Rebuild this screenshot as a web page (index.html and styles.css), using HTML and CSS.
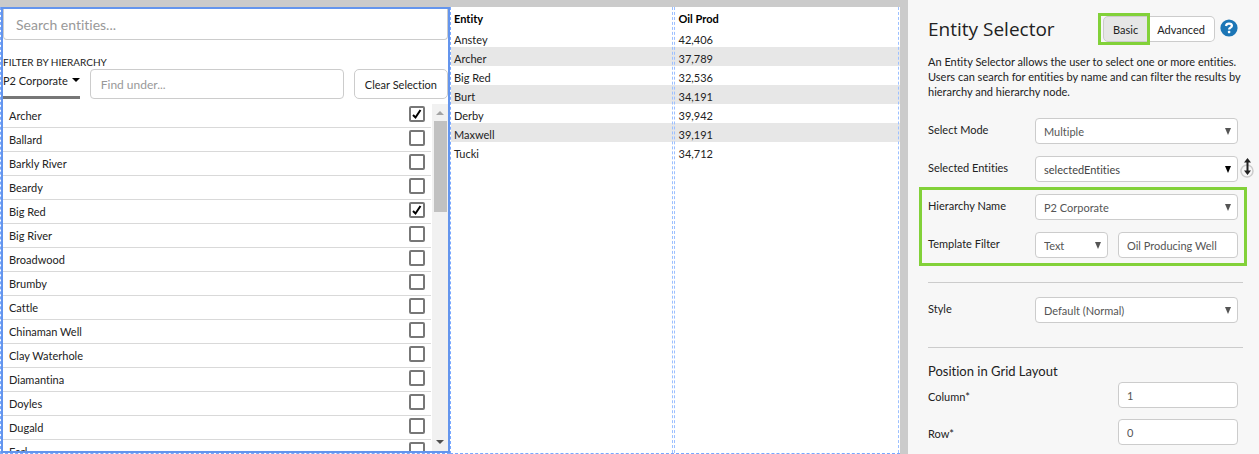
FILE: index.html
```html
<!DOCTYPE html>
<html lang="en">
<head>
<meta charset="utf-8">
<title>Entity Selector</title>
<link rel="stylesheet" href="styles.css">
</head>
<body>
<div class="app">
  <main class="canvas">
    <section class="selector">
      <div class="selector-frame">
        <input class="search" type="text" placeholder="Search entities..." aria-label="Search entities">
        <div class="filter-title">FILTER BY HIERARCHY</div>
        <div class="filter-row">
          <button class="hierarchy" type="button">P2 Corporate <span class="caret"></span></button>
          <input class="find" type="text" placeholder="Find under..." aria-label="Find under">
          <button class="clear" type="button">Clear Selection</button>
        </div>
        <div class="list-area">
          <div class="list">
            <label class="item"><span>Archer</span><input type="checkbox" checked></label>
            <label class="item"><span>Ballard</span><input type="checkbox"></label>
            <label class="item"><span>Barkly River</span><input type="checkbox"></label>
            <label class="item"><span>Beardy</span><input type="checkbox"></label>
            <label class="item"><span>Big Red</span><input type="checkbox" checked></label>
            <label class="item"><span>Big River</span><input type="checkbox"></label>
            <label class="item"><span>Broadwood</span><input type="checkbox"></label>
            <label class="item"><span>Brumby</span><input type="checkbox"></label>
            <label class="item"><span>Cattle</span><input type="checkbox"></label>
            <label class="item"><span>Chinaman Well</span><input type="checkbox"></label>
            <label class="item"><span>Clay Waterhole</span><input type="checkbox"></label>
            <label class="item"><span>Diamantina</span><input type="checkbox"></label>
            <label class="item"><span>Doyles</span><input type="checkbox"></label>
            <label class="item"><span>Dugald</span><input type="checkbox"></label>
            <label class="item"><span>Earl</span><input type="checkbox"></label>
          </div>
          <div class="scrollbar" aria-hidden="true">
            <span class="arrow arrow-up"></span>
            <span class="thumb"></span>
            <span class="arrow arrow-down"></span>
          </div>
        </div>
      </div>
    </section>
    <section class="results">
      <table class="data">
        <thead><tr><th>Entity</th><th>Oil Prod</th></tr></thead>
        <tbody>
          <tr><td>Anstey</td><td>42,406</td></tr>
          <tr><td>Archer</td><td>37,789</td></tr>
          <tr><td>Big Red</td><td>32,536</td></tr>
          <tr><td>Burt</td><td>34,191</td></tr>
          <tr><td>Derby</td><td>39,942</td></tr>
          <tr><td>Maxwell</td><td>39,191</td></tr>
          <tr><td>Tucki</td><td>34,712</td></tr>
        </tbody>
      </table>
      <div class="guides" aria-hidden="true"><span></span><span></span></div>
    </section>
  </main>
  <aside class="props">
    <header class="props-head">
      <h1>Entity Selector</h1>
      <div class="modes">
        <button class="mode mode-on" type="button">Basic</button>
        <button class="mode" type="button">Advanced</button>
      </div>
      <svg class="help" viewBox="0 0 18 18" role="img" aria-label="Help"><circle cx="9" cy="9" r="8.6" fill="#1c76b6"/><path d="M6 7C6.200 5.300 7.400 4.600 9 4.600c1.800 0 2.900.9 2.900 2.200 0 1.900-2.800 1.800-2.800 3.700" fill="none" stroke="#fff" stroke-width="2.300"/><rect x="7.900" y="11.800" width="2.400" height="2.400" rx=".7" fill="#fff"/></svg>
    </header>
    <p class="intro">An Entity Selector allows the user to select one or more entities. Users can search for entities by name and can filter the results by hierarchy and hierarchy node.</p>
    <div class="fields">
      <div class="field">
        <label for="mode">Select Mode</label>
        <select id="mode"><option>Multiple</option></select>
      </div>
      <div class="field">
        <label for="selected">Selected Entities</label>
        <div class="bound">
          <select id="selected" class="strong"><option>selectedEntities</option></select>
          <svg class="link" viewBox="0 0 14 22" aria-hidden="true"><circle cx="7" cy="14" r="6" fill="none" stroke="#ccc" stroke-width="1.500"/><path d="M7.500 3v13" stroke="#222" stroke-width="2"/><path d="M7.500 1 11 5.500H4zM7.500 18l3.500-4.500H4z" fill="#222"/></svg>
        </div>
      </div>
      <div class="marked">
        <div class="field">
          <label for="hier">Hierarchy Name</label>
          <select id="hier"><option>P2 Corporate</option></select>
        </div>
        <div class="field">
          <label for="kind">Template Filter</label>
          <div class="pair">
            <select id="kind"><option>Text</option></select>
            <input type="text" value="Oil Producing Well" aria-label="Template">
          </div>
        </div>
      </div>
    </div>
    <hr>
    <div class="field style-field">
      <label for="style">Style</label>
      <select id="style"><option>Default (Normal)</option></select>
    </div>
    <hr>
    <h2>Position in Grid Layout</h2>
    <div class="cells">
      <div class="cell"><label for="col">Column*</label><input id="col" type="text" value="1"></div>
      <div class="cell"><label for="row">Row*</label><input id="row" type="text" value="0"></div>
    </div>
  </aside>
</div>
</body>
</html>
```
FILE: styles.css
```css
* { box-sizing: border-box; }
body {
  margin: 0;
  font-family: Lato, "Open Sans", sans-serif;
  font-size: 11px;
  line-height: 15px;
  font-variant-ligatures: none;
  color: #222;
}
button, input, select { font: inherit; font-variant-ligatures: none; color: inherit; margin: 0; }
.app {
  display: grid;
  grid-template-columns: minmax(0, 1fr) 351px;
  height: 100vh;
  overflow: hidden;
}

/* Design canvas */
.canvas {
  display: grid;
  grid-template-columns: 1fr 1fr;
  min-height: 0;
  background: #fff;
  border-top: 7px solid #cbcbcb;
  border-right: 8px solid #cbcbcb;
}
.selector {
  min-width: 0;
  min-height: 0;
  border: 1px dashed #78a8ff;
  border-width: 0 0 1px 1px;
}
.selector-frame {
  display: flex;
  flex-direction: column;
  height: 100%;
  border: 2px solid #6495ed;
  overflow: hidden;
}
.search, .find, .clear {
  border: 1px solid #ccc;
  border-radius: 4px;
  background: #fff;
}
.search {
  flex: none;
  width: 100%;
  height: 31px;
  padding: 0 12px;
  border-top: 0;
  border-radius: 0 0 4px 4px;
  font-size: 14px;
}
::placeholder { color: #999; opacity: 1; }
.filter-title { margin-top: 15px; line-height: 14px; font-size: 10px; }
.filter-row { display: flex; flex: none; gap: 10px; }
.hierarchy {
  display: flex;
  align-items: center;
  gap: 4px;
  height: 30px;
  padding: 0 0 5px;
  border: 0;
  border-bottom: 3px solid #777;
  background: none;
  white-space: nowrap;
}
.caret {
  border: 4px solid transparent;
  border-top-color: #000;
  border-bottom: 0;
}
.find { flex: 1; min-width: 0; height: 30px; padding: 0 10px; font-size: 12px; }
.clear { height: 30px; padding: 0 10px; border-radius: 5px; white-space: nowrap; }
.list-area { display: flex; flex: 1; min-height: 0; margin-top: 5px; }
.list { flex: 1; overflow: hidden; }
.item {
  display: flex;
  align-items: flex-start;
  justify-content: space-between;
  height: 24px;
  padding: 2px 6px 0 6px;
  border-bottom: 1px solid #d9d9d9;
}
.item span { padding-top: 2px; }
.item input {
  appearance: none;
  width: 16px;
  height: 16px;
  border: 2px solid #777;
  border-radius: 2px;
  background: #fff;
}
.item input:checked {
  background: #fff url("data:image/svg+xml,%3Csvg xmlns='http://www.w3.org/2000/svg' viewBox='0 0 12 12'%3E%3Cpath d='M2 7l2.500 2.500L9.500 2' fill='none' stroke='%23000' stroke-width='2'/%3E%3C/svg%3E") center / 12px 12px;
}
.scrollbar {
  display: flex;
  flex-direction: column;
  align-items: center;
  width: 16px;
  margin-left: 1px;
  padding: 7px 0;
  background: #f1f1f1;
}
.arrow { border: 4px solid transparent; }
.arrow-up { border-top: 0; border-bottom-color: #a3a3a3; }
.arrow-down { border-bottom: 0; border-top-color: #505050; margin-top: auto; }
.thumb { width: 13px; height: 91px; margin-top: 6px; background: #c1c1c1; }

.results {
  position: relative;
  min-width: 0;
  border: 1px dashed #78a8ff;
  border-width: 0 0 1px 1px;
}
.data {
  width: 100%;
  border-collapse: collapse;
  table-layout: fixed;
}
.data th, .data td {
  height: 19px;
  padding: 4px 3px 0;
  line-height: 15px;
  text-align: left;
}
.data th { height: 21px; padding: 4px 3px 2px; color: #000; }
.data tbody tr:nth-child(even) { background: #e7e7e7; }
.guides {
  position: absolute;
  inset: 0 1px 0 0;
  display: grid;
  grid-template-columns: minmax(0, 99fr) minmax(0, 100fr);
  gap: 1px;
}
.guides span { border-right: 1px dashed #9dc0ff; }
.guides span + span { border-left: 1px dashed #9dc0ff; }

/* Properties panel */
.props {
  padding: 16px 16px 0 20px;
  background: #f7f7f7;
  min-height: 0;
  overflow: hidden;
}
.props-head { display: flex; align-items: center; height: 26px; }
h1, h2 { margin: 0; font-weight: 400; }
h1 {
  flex: 1;
  font-family: "Open Sans", "Noto Sans", sans-serif;
  font-size: 19px;
  line-height: 26px;
  white-space: nowrap;
}
.modes { display: flex; }
.mode {
  position: relative;
  height: 26px;
  padding: 0 9px;
  border: 1px solid #ccc;
  border-left: 0;
  border-radius: 0 5px 5px 0;
  background: #fff;
}
.mode-on {
  z-index: 1;
  border-left: 1px solid #ccc;
  border-radius: 5px 0 0 5px;
  background: #e6e6e6;
}
.mode-on::after {
  content: "";
  position: absolute;
  inset: -4px -3px -4px -6px;
  border: 3px solid #82d139;
}
.help { width: 18px; height: 18px; margin: 0 5px 2px; }
.intro { margin: 12px 0 19px; }
.fields { display: grid; gap: 12px; }
.field {
  display: grid;
  grid-template-columns: 107px minmax(0, 1fr);
  padding-right: 5px;
}
.field label, .cell label { padding-top: 4px; }
.props select, .props input {
  width: 100%;
  height: 26px;
  padding: 0 8px;
  border: 1px solid #ccc;
  border-radius: 4px;
  background-color: #fff;
  color: #555;
}
.props select {
  appearance: none;
  background-image: url("data:image/svg+xml,%3Csvg xmlns='http://www.w3.org/2000/svg' viewBox='0 0 6 7'%3E%3Cpath d='M0 0h6L3 7z' fill='%23555'/%3E%3C/svg%3E");
  background-repeat: no-repeat;
  background-position: right 6px center;
  background-size: 6px 7px;
}
.props .strong {
  color: #444;
  background-image: url("data:image/svg+xml,%3Csvg xmlns='http://www.w3.org/2000/svg' viewBox='0 0 6 7'%3E%3Cpath d='M0 0h6L3 7z' fill='%23000'/%3E%3C/svg%3E");
}
.bound { position: relative; }
.link { position: absolute; left: calc(100% + 2px); top: 1px; width: 14px; height: 22px; }
.marked { position: relative; display: grid; gap: 12px; }
.marked::after {
  content: "";
  position: absolute;
  inset: -7px -4px -8px -9px;
  border: 3px solid #82d139;
  pointer-events: none;
}
.pair { display: grid; grid-template-columns: 73px minmax(0, 1fr); gap: 10px; }
hr { height: 1px; margin: 24px 0 0; border: 0; background: #ccc; }
.style-field { margin-top: 14px; }
h2 { margin-top: 14px; font-size: 13px; line-height: 18px; }
.cells { display: grid; gap: 11px; margin-top: 2px; padding-right: 5px; }
.cell { display: grid; grid-template-columns: minmax(0, 1fr) 120px; }
.cell label { padding-top: 7px; }
```
